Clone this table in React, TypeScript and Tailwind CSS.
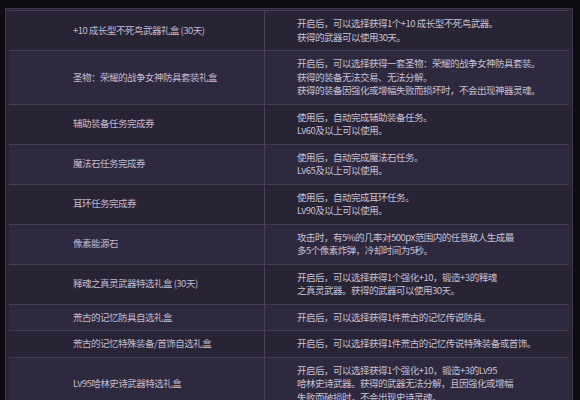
import React from "react";

const rows: { name: string; desc: string[] }[] = [
  { name: "+10 成长型不死鸟武器礼盒 (30天)", desc: ["开启后，可以选择获得1个+10 成长型不死鸟武器。", "获得的武器可以使用30天。"] },
  { name: "圣物：荣耀的战争女神防具套装礼盒", desc: ["开启后，可以选择获得一套圣物：荣耀的战争女神防具套装。", "获得的装备无法交易、无法分解。", "获得的装备因强化或增幅失败而损坏时，不会出现神器灵魂。"] },
  { name: "辅助装备任务完成券", desc: ["使用后，自动完成辅助装备任务。", "Lv60及以上可以使用。"] },
  { name: "魔法石任务完成券", desc: ["使用后，自动完成魔法石任务。", "Lv65及以上可以使用。"] },
  { name: "耳环任务完成券", desc: ["使用后，自动完成耳环任务。", "Lv90及以上可以使用。"] },
  { name: "像素能源石", desc: ["攻击时，有5%的几率对500px范围内的任意敌人生成最", "多5个像素炸弹，冷却时间为5秒。"] },
  { name: "释魂之真灵武器特选礼盒 (30天)", desc: ["开启后，可以选择获得1个强化+10，锻造+3的释魂", "之真灵武器。获得的武器可以使用30天。"] },
  { name: "荒古的记忆防具自选礼盒", desc: ["开启后，可以选择获得1件荒古的记忆传说防具。"] },
  { name: "荒古的记忆特殊装备/首饰自选礼盒", desc: ["开启后，可以选择获得1件荒古的记忆传说特殊装备或首饰。"] },
  { name: "Lv95哈林史诗武器特选礼盒", desc: ["开启后，可以选择获得1个强化+10，锻造+3的Lv95", "哈林史诗武器。获得的武器无法分解，且因强化或增幅", "失败而破损时，不会出现史诗灵魂。"] },
];

export default function App() {
  return (
    <div
      className="w-[580px] h-[400px] overflow-hidden bg-[#0e0b11] pl-[5px] pt-[8px]"
      style={{ fontFamily: '"Noto Sans CJK SC", "Noto Sans", sans-serif' }}
    >
      <div className="w-[568px] border border-[#3f3851] bg-[#2a2436] px-[3px] pt-[1px]">
        <div className="border-t border-[#4a4259]">
          {rows.map((r, i) => (
            <div
              key={i}
              className={
                "flex border-b border-[#453d54] " +
                (i % 2 === 1 ? "bg-[#2f2940]" : "bg-[#292336]")
              }
            >
              <div className="w-[256px] shrink-0 flex items-center border-r border-[#4a4259] pl-[64px] text-[9.5px] tracking-[-0.5px] leading-[13.5px] text-[#c3bbcf] whitespace-nowrap">
                {r.name}
              </div>
              <div className="flex-1 py-[6px] pl-[32px] text-[9.5px] tracking-[-0.5px] leading-[13.5px] text-[#c8c1d3] whitespace-nowrap">
                {r.desc.map((d, j) => (
                  <div key={j}>{d}</div>
                ))}
              </div>
            </div>
          ))}
        </div>
      </div>
    </div>
  );
}
